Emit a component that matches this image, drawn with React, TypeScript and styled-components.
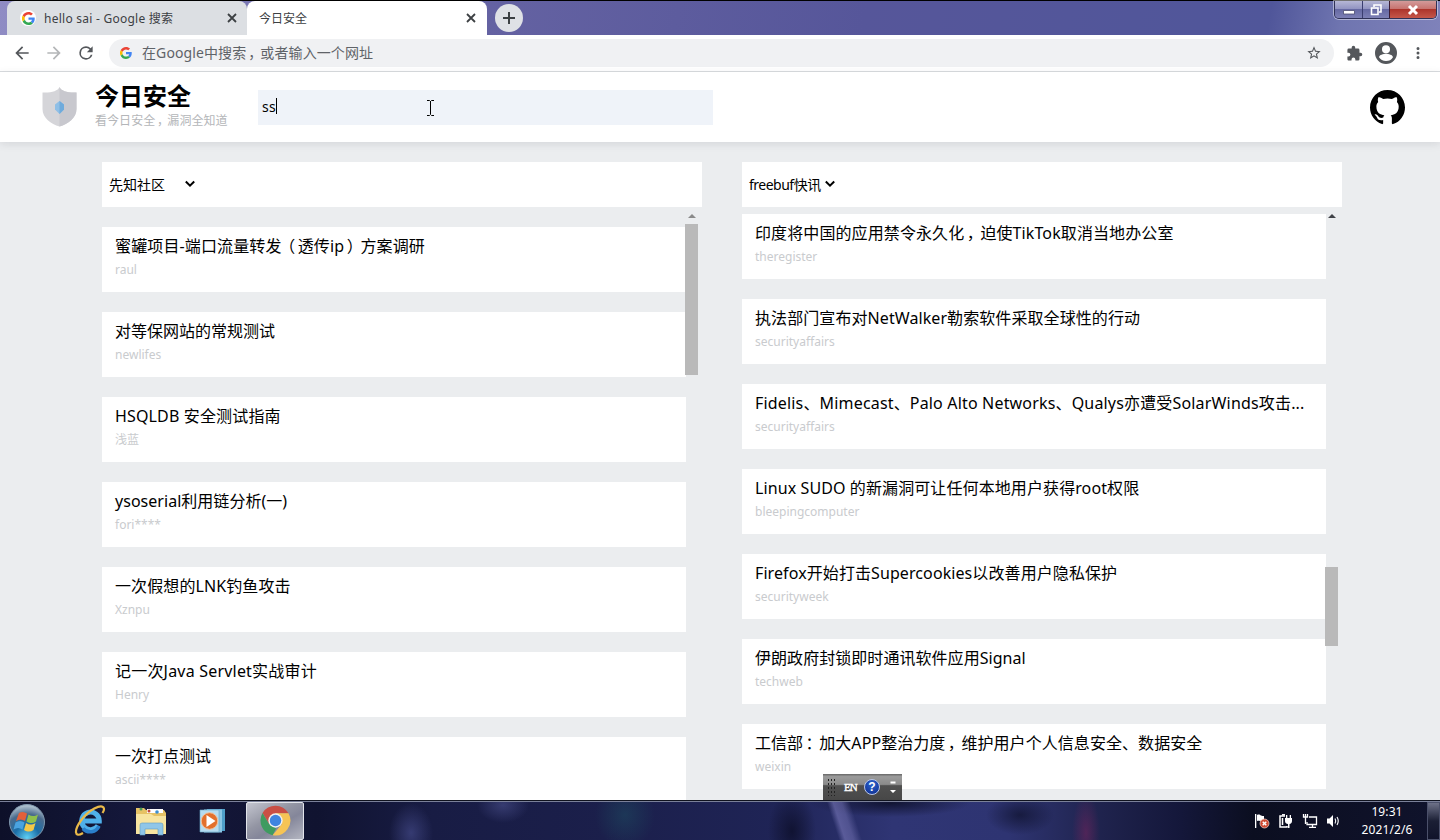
import React from 'react';
import styled, { createGlobalStyle } from 'styled-components';

const sans = `"Noto Sans", "Noto Sans CJK SC", sans-serif`;

const GlobalStyle = createGlobalStyle`
  * { box-sizing: border-box; }
  body { margin: 0; overflow: hidden; font-family: ${sans}; color: #000; }
  h1, p, ul { margin: 0; padding: 0; }
`;

const Screen = styled.div`
  position: relative;
  width: 1440px;
  height: 840px;
  display: flex;
  flex-direction: column;
  overflow: hidden;
  background: #ebedef;
`;

/* Full-width punctuation sits near the middle of its cell, as in YaHei-style faces. */
const Mark = styled.span<{ $shift: number }>`
  display: inline-block;
  transform: translateX(${p => p.$shift}em);
`;
const SHIFTS: Record<string, number> = { '，': 0.15, '（': -0.15, '）': 0.15, '：': 0.15 };
const CjkText = ({ text }: { text: string }) => (
  <>
    {text.split(/([，（）：])/).map((part, i) =>
      part in SHIFTS ? <Mark key={i} $shift={SHIFTS[part]}>{part}</Mark> : part,
    )}
  </>
);

/* ---------- window title bar ---------- */
const TitleBar = styled.div`
  flex: none;
  height: 35px;
  display: flex;
  align-items: flex-start;
  padding-left: 7px;
  border-top: 1px solid #000;
  background: linear-gradient(100deg, #8f8cc4 0, #6462a2 34%, #56569a 60%, #50569a 88%, #6f75b0 93%, #7f82ba 100%);
`;
const Tab = styled.div<{ $active?: boolean }>`
  width: 240px;
  height: 34px;
  display: flex;
  align-items: center;
  padding: 0 ${p => (p.$active ? 9 : 8)}px 0 ${p => (p.$active ? 12 : 13)}px;
  gap: 8px;
  border-radius: 8px 8px 0 0;
  background: ${p => (p.$active ? '#fff' : '#dcdfe3')};
  font-size: 12px;
  color: #3c4043;
`;
const TabLabel = styled.span<{ $spacing?: number }>`
  flex: 1;
  white-space: nowrap;
  letter-spacing: ${p => p.$spacing ?? 0}px;
`;
const NewTab = styled.div`
  width: 28px;
  height: 28px;
  margin: 3px 0 0 8px;
  border-radius: 50%;
  background: #dfe1e6;
  display: grid;
  place-items: center;
`;
const WindowButtons = styled.div`
  display: flex;
  margin: 0 3px 0 auto;
  height: 18px;
  border: 1px solid #2f3157;
  border-top: 0;
  border-radius: 0 0 5px 5px;
  overflow: hidden;
  box-shadow: 0 0 0 1px rgba(255, 255, 255, 0.45);
`;
const WindowButton = styled.div<{ $close?: boolean }>`
  width: ${p => (p.$close ? 47 : 27)}px;
  display: grid;
  place-items: center;
  border-left: 1px solid ${p => (p.$close ? '#3b1c33' : '#3b3e70')};
  &:first-child { border-left: 0; }
  background: ${p =>
    p.$close
      ? 'linear-gradient(#d39a9a 0, #c77470 45%, #ad352c 50%, #c4574a 100%)'
      : 'linear-gradient(#b6b7d6 0, #9395c2 45%, #6669a3 50%, #7d80b5 100%)'};
`;

/* ---------- browser toolbar ---------- */
const Toolbar = styled.div`
  flex: none;
  height: 37px;
  display: flex;
  align-items: center;
  padding: 0 13px 0 12px;
  border-bottom: 1px solid #d9dcdf;
  background: #fff;
`;
const NavButtons = styled.div`
  display: flex;
  gap: 12px;
`;
const Omnibox = styled.div`
  flex: 1;
  height: 28px;
  margin-left: 13px;
  padding: 0 12px 0 11px;
  border-radius: 14px;
  background: #f0f1f3;
  display: flex;
  align-items: center;
  gap: 9px;
  font-size: 14px;
  color: #5f6368;
`;
const OmniText = styled.span`
  flex: 1;
  margin-left: 1px;
  padding-bottom: 2px;
  white-space: nowrap;
  letter-spacing: 0.1px;
`;
const ToolbarActions = styled.div`
  display: flex;
  align-items: center;
  gap: 12px;
  margin: 0 0 0 12px;
`;

/* ---------- site header ---------- */
const SiteHeader = styled.header`
  flex: none;
  height: 70px;
  display: flex;
  align-items: center;
  padding: 0 35px 0 42px;
  background: #fff;
  box-shadow: 0 2px 8px rgba(60, 64, 80, 0.13);
`;
const Brand = styled.div`
  width: 145px;
  margin-left: 16px;
`;
const BrandName = styled.h1`
  font-size: 24px;
  line-height: 26px;
  font-weight: 700;
  margin-top: -2px;
  white-space: nowrap;
`;
const Slogan = styled.p`
  font-size: 12px;
  line-height: 16px;
  margin-top: 4px;
  color: #b4b6b9;
  white-space: nowrap;
  letter-spacing: 0.05px;
`;
const SearchField = styled.div`
  width: 455px;
  height: 35px;
  margin-left: 18px;
  padding: 0 0 2px 4px;
  background: #eff3f9;
  display: flex;
  align-items: center;
  font-size: 14px;
  letter-spacing: 0.3px;
`;
const Caret = styled.span`
  width: 1px;
  height: 16px;
  background: #000;
`;
const Repo = styled.div`
  margin-left: auto;
  height: 35px;
`;
const TextPointer = styled.svg`
  position: absolute;
  left: 426px;
  top: 99px;
`;

/* ---------- feeds ---------- */
const Feeds = styled.main`
  flex: 1;
  min-height: 0;
  display: flex;
  gap: 40px;
  padding: 20px 98px 0 102px;
`;
const Feed = styled.section`
  width: 600px;
  display: flex;
  flex-direction: column;
  min-height: 0;
`;
const SourceBar = styled.div`
  flex: none;
  height: 45px;
  padding: 0 0 1px 7px;
  background: #fff;
  display: flex;
  align-items: center;
  font-size: 14px;
`;
const SourceSelect = styled.div<{ $spacing: number }>`
  width: 87px;
  display: flex;
  align-items: center;
  justify-content: space-between;
  white-space: nowrap;
  letter-spacing: ${p => p.$spacing}px;
`;
const FeedBody = styled.div`
  flex: 1;
  min-height: 0;
  display: flex;
  margin-top: 5px;
  overflow: hidden;
`;
const Cards = styled.ul<{ $offset: number }>`
  width: 584px;
  list-style: none;
  padding-top: ${p => p.$offset}px;
  display: flex;
  flex-direction: column;
  gap: 20px;
`;
const Card = styled.li`
  flex: none;
  height: 65px;
  padding: 8px 13px 0;
  background: #fff;
`;
const CardTitle = styled.p<{ $spacing: number }>`
  font-size: 16px;
  line-height: 22px;
  height: 22px;
  white-space: nowrap;
  letter-spacing: ${p => p.$spacing}px;
`;
const CardAuthor = styled.p`
  font-size: 12px;
  line-height: 16px;
  margin-top: 5px;
  color: #c9cbce;
`;
const ScrollTrack = styled.div`
  width: 13px;
  margin-left: -1px;
  display: flex;
  flex-direction: column;
  align-items: center;
`;
const ScrollUp = styled.div<{ $color: string }>`
  width: 0;
  height: 0;
  margin-top: 2px;
  border: 4px solid transparent;
  border-top: 0;
  border-bottom-color: ${p => p.$color};
`;
const ScrollThumb = styled.div<{ $start: number; $size: number }>`
  width: 13px;
  height: ${p => p.$size}px;
  margin-top: ${p => p.$start}px;
  background: #b9b9b9;
`;

/* ---------- desktop ---------- */
const LanguageBar = styled.div`
  position: absolute;
  left: 823px;
  top: 774px;
  width: 79px;
  height: 26px;
  display: flex;
  align-items: center;
  padding: 0 6px 0 4px;
  background: linear-gradient(#666 0, #9b9b9b 10%, #8b8b8b 40%, #505050 45%, #474747 100%);
  color: #fff;
`;
const LanguageCode = styled.span`
  width: 13px;
  font: 400 11px/14px "Liberation Serif", serif;
  letter-spacing: -1px;
  -webkit-text-stroke: 0.4px #fff;
`;
const Grip = styled.div`
  width: 9px;
  height: 18px;
  background: radial-gradient(circle, #222 0.8px, transparent 1.1px) 0 0 / 3px 4px;
  margin-right: 8px;
`;
const HelpBadge = styled.div`
  width: 16px;
  height: 16px;
  margin-left: 7px;
  border-radius: 50%;
  border: 1px solid #b9c7ea;
  background: radial-gradient(circle at 50% 30%, #2c63d0, #0c2a8a);
  display: grid;
  place-items: center;
  font: 700 12px/14px "Liberation Sans", sans-serif;
`;
const LanguageControls = styled.svg`
  margin-left: auto;
`;
const Taskbar = styled.footer`
  flex: none;
  height: 40px;
  display: flex;
  align-items: center;
  border-top: 1px solid #10131f;
  box-shadow: inset 0 1px 0 #7a8099;
  background:
    radial-gradient(ellipse 22px 30px at 411px 32px, rgba(70, 76, 140, 0.65), transparent),
    radial-gradient(ellipse 26px 18px at 503px 4px, rgba(74, 80, 140, 0.6), transparent),
    radial-gradient(ellipse 30px 34px at 625px 14px, rgba(30, 78, 98, 0.5), transparent),
    linear-gradient(72deg, transparent 798px, rgba(106, 106, 170, 0.75) 804px, rgba(106, 106, 170, 0.6) 812px, transparent 820px),
    radial-gradient(ellipse 24px 40px at 792px 30px, rgba(12, 14, 40, 0.8), transparent),
    radial-gradient(ellipse 80px 14px at 890px 2px, rgba(14, 17, 44, 0.9), transparent),
    radial-gradient(ellipse 14px 40px at 1086px 32px, rgba(110, 36, 92, 0.6), transparent),
    radial-gradient(ellipse 34px 20px at 1020px 14px, rgba(14, 17, 44, 0.7), transparent),
    linear-gradient(90deg, #0d1029 0, #15183c 10%, #101330 22%, #181c44 30%, #1b1f4b 42%, #1f2456 54%, #2f3574 62%, #2e3472 70%, #20244f 76%, #14173a 82%, #0b0e20 87%, #10132c 100%);
`;
const Launchers = styled.div`
  display: flex;
  gap: 4px;
  margin-left: -2px;
`;
const Launcher = styled.div<{ $active?: boolean }>`
  width: 58px;
  height: 38px;
  display: grid;
  place-items: center;
  border-radius: 2px;
  border: 1px solid ${p => (p.$active ? '#e2e4ea' : 'transparent')};
  background: ${p => (p.$active ? 'linear-gradient(150deg, #c3c5cf 0, #9496a4 40%, #84869a 60%, #b4b6c1 100%)' : 'none')};
`;
const Tray = styled.div`
  margin-left: auto;
  display: flex;
  align-items: center;
  gap: 8px;
`;
const Clock = styled.div`
  width: 60px;
  margin: 0 2px 0 7px;
  text-align: center;
  color: #fff;
  font-size: 12px;
  line-height: 18px;
  letter-spacing: 0.1px;
`;
const ShowDesktop = styled.div`
  width: 13px;
  height: 38px;
  border: 1px solid #4b506a;
  background: linear-gradient(#6d7188, #1b1f35 50%, #10132a);
`;

const GoogleG = ({ size }: { size: number }) => (
  <svg width={size} height={size} viewBox="0 0 48 48">
    <path fill="#EA4335" d="M24 9.5c3.54 0 6.71 1.22 9.21 3.6l6.85-6.85C35.9 2.38 30.47 0 24 0 14.62 0 6.51 5.38 2.56 13.22l7.98 6.19C12.43 13.72 17.74 9.5 24 9.5z" />
    <path fill="#4285F4" d="M46.98 24.55c0-1.57-.15-3.09-.38-4.55H24v9.02h12.94c-.58 2.96-2.26 5.48-4.78 7.18l7.73 6c4.51-4.18 7.09-10.36 7.09-17.65z" />
    <path fill="#FBBC05" d="M10.53 28.59a14.5 14.5 0 0 1 0-9.18l-7.98-6.19a24 24 0 0 0 0 21.56l7.98-6.19z" />
    <path fill="#34A853" d="M24 48c6.48 0 11.93-2.13 15.89-5.81l-7.73-6c-2.15 1.45-4.92 2.3-8.16 2.3-6.26 0-11.57-4.22-13.47-9.91l-7.98 6.19C6.51 42.62 14.62 48 24 48z" />
  </svg>
);

const GoogleFavicon = styled.div`
  width: 16px;
  height: 16px;
  border-radius: 50%;
  background: #fff;
  display: grid;
  place-items: center;
`;

const CloseIcon = () => (
  <svg width="14" height="14" viewBox="0 0 14 14" stroke="#3c4043" strokeWidth="1.8" fill="none">
    <path d="M3 3l8 8M11 3l-8 8" />
  </svg>
);

const Chevron = () => (
  <svg width="12" height="12" viewBox="0 0 12 12" fill="none" stroke="#000" strokeWidth="2">
    <path d="M1.800 3.500L6 7.700l4.200-4.200" />
  </svg>
);

const MaterialIcon = ({ d, size = 20, color = '#54575b' }: { d: string; size?: number; color?: string }) => (
  <svg width={size} height={size} viewBox="0 0 24 24" fill={color}>
    <path d={d} />
  </svg>
);

const BACK = 'M20 11H7.83l5.59-5.59L12 4l-8 8 8 8 1.41-1.41L7.83 13H20v-2z';
const FORWARD = 'M12 4l-1.41 1.41L16.17 11H4v2h12.17l-5.58 5.59L12 20l8-8z';
const RELOAD = 'M17.65 6.35A7.96 7.96 0 0 0 12 4a8 8 0 1 0 7.73 10h-2.08A6 6 0 1 1 12 6c1.66 0 3.14.69 4.22 1.78L13 11h7V4l-2.35 2.35z';
const STAR = 'M22 9.24l-7.19-.62L12 2 9.19 8.63 2 9.24l5.46 4.73L5.82 21 12 17.27 18.18 21l-1.63-7.03L22 9.24zM12 15.4l-3.76 2.27 1-4.28-3.32-2.88 4.38-.38L12 6.1l1.71 4.04 4.38.38-3.32 2.88 1 4.28L12 15.4z';
const PUZZLE = 'M20.5 11H19V7a2 2 0 0 0-2-2h-4V3.5a2.500 2.500 0 0 0-5 0V5H4a2 2 0 0 0-2 2v3.8h1.5a2.7 2.7 0 0 1 0 5.4H2V20c0 1.1.9 2 2 2h3.8v-1.5a2.7 2.7 0 0 1 5.4 0V22H17a2 2 0 0 0 2-2v-4h1.5a2.5 2.5 0 0 0 0-5z';
const ACCOUNT = 'M12 0a12 12 0 1 0 0 24 12 12 0 0 0 0-24zm0 3.6a4.4 4.4 0 1 1 0 8.8 4.4 4.4 0 0 1 0-8.8zm0 17.2c-3.3 0-6.1-1.7-7.6-4.2 0-2.5 5-3.8 7.6-3.8s7.6 1.3 7.6 3.8a8.9 8.9 0 0 1-7.6 4.2z';
const MORE = 'M12 8a2 2 0 1 0 0-4 2 2 0 0 0 0 4zm0 2a2 2 0 1 0 0 4 2 2 0 0 0 0-4zm0 6a2 2 0 1 0 0 4 2 2 0 0 0 0-4z';

const ShieldLogo = () => (
  <svg width="37" height="40" viewBox="0 0 37 40">
    <path fill="#d5d5d9" d="M17.500 0C19 4 26 6 34.500 5.500V22C34.500 31 26 37 17.500 39.500 9 37 0.500 31 0.500 22V5.500C9 6 16 4 17.500 0z" />
    <path fill="#c8c8ce" d="M17.500 0C19 4 26 6 34.500 5.500V22C34.500 31 26 37 17.500 39.500z" />
    <path fill="#8fbfe6" d="M17.500 14l4.500 3.500v5l-4.500 4.500-4.500-4.500v-5z" />
    <path fill="#6fabdc" d="M17.500 14l4.500 3.500v5l-4.500 4.500z" />
  </svg>
);

const GithubMark = () => (
  <svg width="35" height="35" viewBox="0 0 16 16">
    <path d="M8 0C3.58 0 0 3.58 0 8c0 3.54 2.29 6.53 5.47 7.59.4.07.55-.17.55-.38 0-.19-.01-.82-.01-1.49-2.01.37-2.53-.49-2.69-.94-.09-.23-.48-.94-.82-1.13-.28-.15-.68-.52-.01-.53.63-.01 1.08.58 1.23.82.72 1.21 1.87.87 2.33.66.07-.52.28-.87.51-1.07-1.78-.2-3.64-.89-3.64-3.95 0-.87.31-1.59.82-2.15-.08-.2-.36-1.02.08-2.12 0 0 .67-.21 2.2.82.64-.18 1.32-.27 2-.27s1.36.09 2 .27c1.53-1.04 2.2-.82 2.2-.82.44 1.1.16 1.92.08 2.12.51.56.82 1.27.82 2.15 0 3.07-1.87 3.75-3.65 3.95.29.25.54.73.54 1.48 0 1.07-.01 1.93-.01 2.2 0 .21.15.46.55.38A8.01 8.01 0 0 0 16 8c0-4.42-3.58-8-8-8z" />
  </svg>
);

const StartOrb = () => (
  <svg width="38" height="38" viewBox="0 0 38 38">
    <defs>
      <radialGradient id="orb" cx="50%" cy="95%" r="90%">
        <stop offset="0" stopColor="#5fd0f5" />
        <stop offset="0.4" stopColor="#1c6fa8" />
        <stop offset="0.75" stopColor="#4a6a8c" />
        <stop offset="1" stopColor="#a9bccb" />
      </radialGradient>
    </defs>
    <circle cx="19" cy="19" r="17.500" fill="url(#orb)" stroke="#7f97ad" />
    <path fill="#e2603a" d="M11 10c3-1.500 5.500-1 8 .5l-2 7.500c-3-2-6-2-9 0z" />
    <path fill="#8fc04c" d="M20.500 11.500c3 2 6 2 9.500 0l-2 7c-3 2-6 2-9.500 0z" />
    <path fill="#4aa3e0" d="M7.500 19.500c3-2 6-2 9 0l-2 7c-3-2-6-2-9 0z" />
    <path fill="#f6c847" d="M18 20c3 2 6 2 9.500 0l-2 7c-3 2-6 2-9.500 0z" />
  </svg>
);

const ExplorerE = () => (
  <svg width="34" height="34" viewBox="0 0 34 34" fill="none">
    <path d="M26 21.500a8.800 8.800 0 1 1 1.300-4.500H12" stroke="#4fb0ea" strokeWidth="5" />
    <path d="M27 22a9.500 9.500 0 0 1-16 2.500" stroke="#2a7fcb" strokeWidth="3.500" />
    <path d="M11 29c-9 5.500-9-3-2-12.500C17 5.500 29 0 31.500 3.500c1 1.500 0 4-1 5.500" stroke="#e9b949" strokeWidth="2.200" />
  </svg>
);

const FolderIcon = () => (
  <svg width="34" height="32" viewBox="0 0 34 32">
    <path fill="#e6c265" d="M2 3h8l2 2h18l2 3v21H2z" />
    <path fill="#fff" d="M13 4h16v4H13z" />
    <circle cx="7" cy="4" r="1.500" fill="#4a9b57" />
    <circle cx="15" cy="6" r="1.500" fill="#c04a3c" />
    <circle cx="23" cy="7" r="1.800" fill="#3d8fd0" />
    <path fill="#f7e4a0" d="M2 9h15l3 2h12v18H2z" />
    <path fill="#8fc6e8" stroke="#5f9cc4" strokeWidth="0.600" d="M6 30V20q0-2 2-2h19q2 0 2 2v10h-5v-6H11v6z" />
  </svg>
);

const MediaPlayer = () => (
  <svg width="28" height="28" viewBox="0 0 28 28">
    <path fill="#4f9fc9" d="M8 2h18v22H8z" />
    <path fill="#8cc7e4" d="M5 2.500h18v23H5z" />
    <path fill="#b5dcf0" stroke="#6aa7c8" strokeWidth="0.600" d="M1 3h19v22H1z" />
    <circle cx="10.500" cy="14" r="8.300" fill="#e2702c" stroke="#f3c29a" />
    <path fill="#fff" d="M7.500 8l9 6-9 6z" />
  </svg>
);

const ChromeIcon = () => (
  <svg width="31" height="31" viewBox="0 0 32 32">
    <path fill="#c94f45" d="M2.600 8.250A15.500 15.500 0 0 1 29.400 8.500H16l-6.500 11.200z" />
    <path fill="#3f9b60" d="M2.600 8.250l6.900 11.500L16 23.500l.5 1-3.500 6.700A15.500 15.500 0 0 1 2.600 8.250z" />
    <path fill="#f6c455" d="M29.400 8.500A15.500 15.500 0 0 1 13 31.200l9.500-11.500L16 8.500z" />
    <circle cx="16" cy="16" r="7.400" fill="#f1f1f1" />
    <circle cx="16" cy="16" r="5.900" fill="#3f84e0" />
  </svg>
);

const FlagIcon = () => (
  <svg width="16" height="16" viewBox="0 0 16 16">
    <path fill="#fff" d="M1 1h1.300v14H1zM3 2c2-1 3 0 4 .5s2 .5 3 .5v6C8 9 7 8.500 6 8s-2-.5-3 0z" />
    <circle cx="10.500" cy="10.500" r="4.500" fill="#cf4a32" stroke="#f0d0c8" strokeWidth="0.700" />
    <path d="M8.700 8.700l3.600 3.600m0-3.600l-3.600 3.600" stroke="#fff" strokeWidth="1.400" />
  </svg>
);
const PowerIcon = () => (
  <svg width="16" height="16" viewBox="0 0 16 16" fill="none" stroke="#fff" strokeWidth="1.500">
    <path d="M7 3H2v11h7v-1M4.500 5v7" />
    <path d="M4 1.800h3" />
    <path fill="#fff" stroke="none" d="M7 5h7v3c0 1.800-1 2.800-2.500 3v4H10v-4c-2-.2-3-1.200-3-3zM8 2h1.300v3H8zM11.700 2H13v3h-1.300z" />
  </svg>
);
const NetworkIcon = () => (
  <svg width="16" height="16" viewBox="0 0 16 16" fill="none" stroke="#fff" strokeWidth="1.300">
    <path d="M7 4h7.500v7.500H5V9M7 14.300h7M10.500 12v2" />
    <path d="M1.500 1v3h4V1M3.500 1v6v4" />
  </svg>
);
const VolumeIcon = () => (
  <svg width="16" height="16" viewBox="0 0 16 16" fill="none" stroke="#fff" strokeWidth="1.100">
    <path fill="#fff" stroke="none" d="M1 5.500h2.500L7 2v12l-3.500-3.500H1z" />
    <path d="M9 5.500q1.500 2.500 0 5M11 4q2.500 4 0 8" />
  </svg>
);

interface Entry {
  title: string;
  author: string;
  spacing?: number;
}
interface FeedData {
  source: string;
  sourceSpacing: number;
  entries: Entry[];
  offset: number;
  arrow: string;
  thumbStart: number;
  thumbSize: number;
}

const feeds: FeedData[] = [
  {
    source: '先知社区',
    sourceSpacing: 0,
    offset: 15,
    arrow: '#8a8a8a',
    thumbStart: 6,
    thumbSize: 151,
    entries: [
      { title: '蜜罐项目-端口流量转发（透传ip）方案调研', author: 'raul', spacing: 0.13 },
      { title: '对等保网站的常规测试', author: 'newlifes' },
      { title: 'HSQLDB 安全测试指南', author: '浅蓝', spacing: 0.15 },
      { title: 'ysoserial利用链分析(一)', author: 'fori****', spacing: 0.03 },
      { title: '一次假想的LNK钓鱼攻击', author: 'Xznpu', spacing: 0.1 },
      { title: '记一次Java Servlet实战审计', author: 'Henry', spacing: 0.2 },
      { title: '一次打点测试', author: 'ascii****' },
    ],
  },
  {
    source: 'freebuf快讯',
    sourceSpacing: -0.5,
    offset: 2,
    arrow: '#404348',
    thumbStart: 349,
    thumbSize: 79,
    entries: [
      { title: '印度将中国的应用禁令永久化，迫使TikTok取消当地办公室', author: 'theregister', spacing: 0.1 },
      { title: '执法部门宣布对NetWalker勒索软件采取全球性的行动', author: 'securityaffairs', spacing: 0.08 },
      { title: 'Fidelis、Mimecast、Palo Alto Networks、Qualys亦遭受SolarWinds攻击...', author: 'securityaffairs', spacing: 0.17 },
      { title: 'Linux SUDO 的新漏洞可让任何本地用户获得root权限', author: 'bleepingcomputer', spacing: 0.1 },
      { title: 'Firefox开始打击Supercookies以改善用户隐私保护', author: 'securityweek', spacing: 0.09 },
      { title: '伊朗政府封锁即时通讯软件应用Signal', author: 'techweb', spacing: 0.05 },
      { title: '工信部：加大APP整治力度，维护用户个人信息安全、数据安全', author: 'weixin', spacing: 0.06 },
    ],
  },
];

export default function App() {
  return (
    <Screen>
      <GlobalStyle />
      <TitleBar>
        <Tab>
          <GoogleFavicon><GoogleG size={13} /></GoogleFavicon>
          <TabLabel $spacing={0.25}>hello sai - Google 搜索</TabLabel>
          <CloseIcon />
        </Tab>
        <Tab $active>
          <TabLabel>今日安全</TabLabel>
          <CloseIcon />
        </Tab>
        <NewTab>
          <svg width="14" height="14" viewBox="0 0 14 14" stroke="#3c4043" strokeWidth="2"><path d="M7 1v12M1 7h12" /></svg>
        </NewTab>
        <WindowButtons>
          <WindowButton>
            <svg width="12" height="12" viewBox="0 0 12 12"><path d="M.5 6.500h11v3.500H.5z" fill="#fff" stroke="#4b4d70" strokeWidth="0.800" /></svg>
          </WindowButton>
          <WindowButton>
            <svg width="12" height="12" viewBox="0 0 12 12" fill="none" stroke="#fff" strokeWidth="1.600"><path d="M4 3V1h7v7H9M1.500 4h6.500v6.500H1.500z" /></svg>
          </WindowButton>
          <WindowButton $close>
            <svg width="12" height="12" viewBox="0 0 12 12" stroke="#fff" strokeWidth="3"><path d="M2 2l8 8M10 2l-8 8" /></svg>
          </WindowButton>
        </WindowButtons>
      </TitleBar>
      <Toolbar>
        <NavButtons>
          <MaterialIcon d={BACK} />
          <MaterialIcon d={FORWARD} color="#b4b6b8" />
          <MaterialIcon d={RELOAD} />
        </NavButtons>
        <Omnibox>
          <GoogleG size={12} />
          <OmniText><CjkText text="在Google中搜索，或者输入一个网址" /></OmniText>
          <MaterialIcon d={STAR} size={16} />
        </Omnibox>
        <ToolbarActions>
          <MaterialIcon d={PUZZLE} size={17} />
          <MaterialIcon d={ACCOUNT} size={22} />
          <MaterialIcon d={MORE} size={18} />
        </ToolbarActions>
      </Toolbar>
      <SiteHeader>
        <ShieldLogo />
        <Brand>
          <BrandName>今日安全</BrandName>
          <Slogan><CjkText text="看今日安全，漏洞全知道" /></Slogan>
        </Brand>
        <SearchField>
          <span>ss</span>
          <Caret />
        </SearchField>
        <Repo><GithubMark /></Repo>
      </SiteHeader>
      <Feeds>
        {feeds.map(feed => (
          <Feed key={feed.source}>
            <SourceBar>
              <SourceSelect $spacing={feed.sourceSpacing}>
                <span>{feed.source}</span>
                <Chevron />
              </SourceSelect>
            </SourceBar>
            <FeedBody>
              <Cards $offset={feed.offset}>
                {feed.entries.map(entry => (
                  <Card key={entry.title}>
                    <CardTitle $spacing={entry.spacing ?? 0}><CjkText text={entry.title} /></CardTitle>
                    <CardAuthor>{entry.author}</CardAuthor>
                  </Card>
                ))}
              </Cards>
              <ScrollTrack>
                <ScrollUp $color={feed.arrow} />
                <ScrollThumb $start={feed.thumbStart} $size={feed.thumbSize} />
              </ScrollTrack>
            </FeedBody>
          </Feed>
        ))}
      </Feeds>
      <Taskbar>
        <Launchers>
          <Launcher><StartOrb /></Launcher>
          <Launcher><ExplorerE /></Launcher>
          <Launcher><FolderIcon /></Launcher>
          <Launcher><MediaPlayer /></Launcher>
          <Launcher $active><ChromeIcon /></Launcher>
        </Launchers>
        <Tray>
          <FlagIcon />
          <PowerIcon />
          <NetworkIcon />
          <VolumeIcon />
          <Clock>
            <div>19:31</div>
            <div>2021/2/6</div>
          </Clock>
          <ShowDesktop />
        </Tray>
      </Taskbar>
      <TextPointer width="9" height="18" viewBox="0 0 9 18" fill="none" stroke="#000">
        <path d="M1 1.500h2.500l1 1 1-1H8M4.500 2v13M1 16.500h2.500l1-1 1 1H8" />
      </TextPointer>
      <LanguageBar>
        <Grip />
        <LanguageCode>EN</LanguageCode>
        <HelpBadge>?</HelpBadge>
        <LanguageControls width="6" height="16" viewBox="0 0 6 16" fill="#fff">
          <path d="M.5 2.500h5v2h-5zM0 11h6l-3 3z" />
        </LanguageControls>
      </LanguageBar>
    </Screen>
  );
}
